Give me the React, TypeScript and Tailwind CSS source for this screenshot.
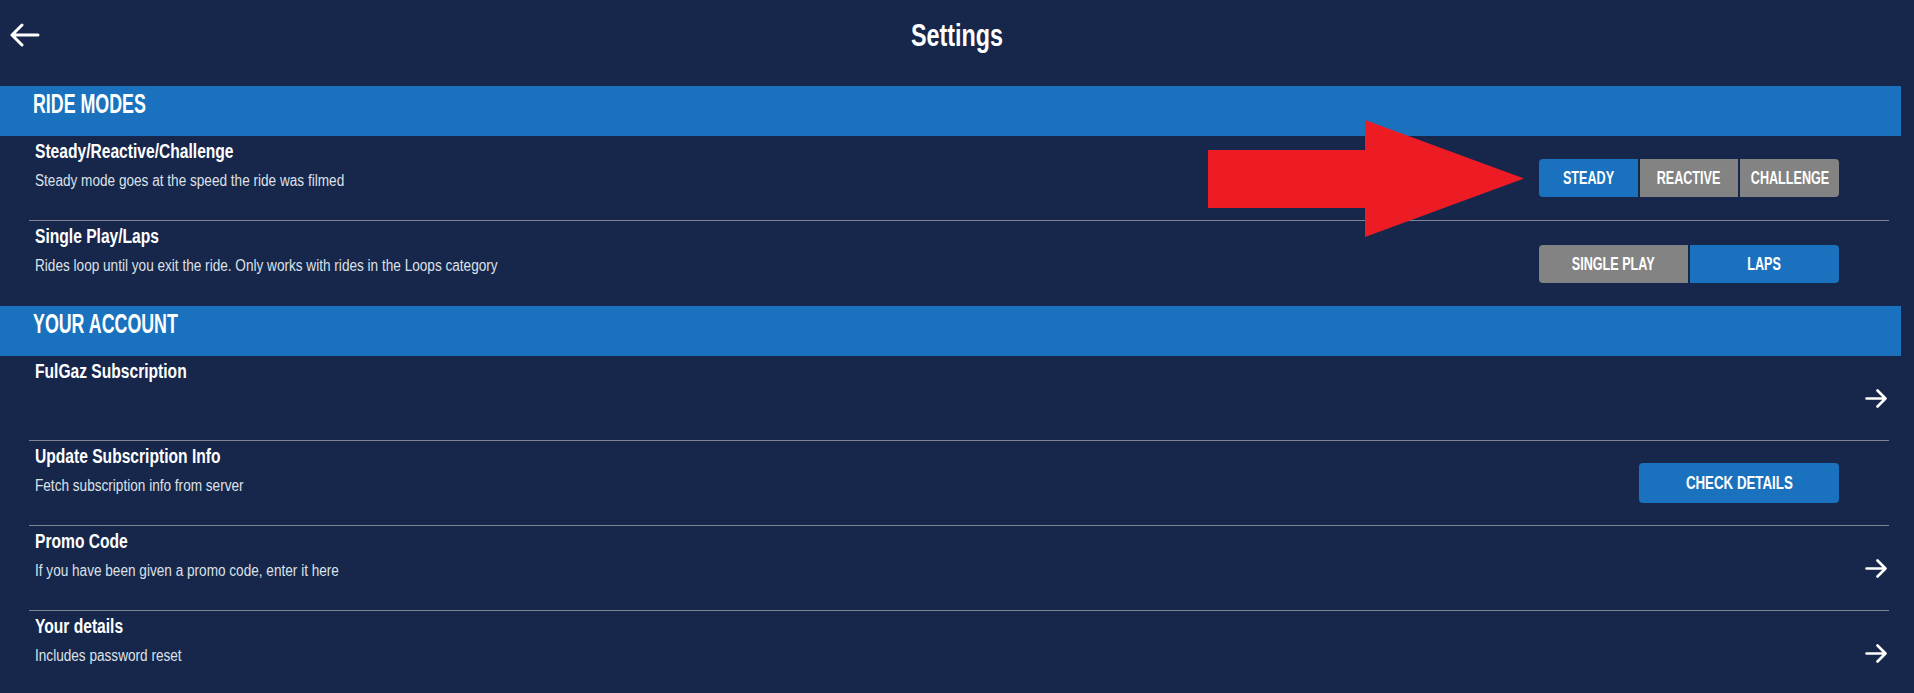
import React from "react";
import clsx from "clsx";

const BackArrowIcon = () => (
  <svg width="31" height="24" viewBox="0 0 31 24" fill="none">
    <path
      d="M29 12H3M13 2L3 12L13 22"
      stroke="#ffffff"
      strokeWidth="3"
      strokeLinecap="round"
      strokeLinejoin="round"
    />
  </svg>
);

const ForwardArrowIcon = () => (
  <svg width="23" height="19" viewBox="0 0 23 19" fill="none">
    <path
      d="M1.5 9.5H20.5M12.5 1.5L20.5 9.5L12.5 17.5"
      stroke="#ffffff"
      strokeWidth="2.6"
      strokeLinecap="round"
      strokeLinejoin="round"
    />
  </svg>
);

// the red annotation arrow drawn over the screenshot
const RedArrow = () => (
  <svg
    className="absolute left-[1208px] top-[120px]"
    width="316"
    height="117"
    viewBox="0 0 316 117"
  >
    <polygon points="0,30 157,30 157,0 316,58.5 157,117 157,88 0,88" fill="#ed1c24" />
  </svg>
);

const SectionHeader = ({ label }: { label: string }) => (
  <div className="mr-[13px] h-[50px] bg-[#1a72be] pl-[33px] pt-[2px]">
    <div className="origin-left scale-x-66 text-[27px] font-bold leading-[32px] text-white">
      {label}
    </div>
  </div>
);

interface SegmentedProps {
  options: string[];
  active: number;
}

const Segmented = ({ options, active }: SegmentedProps) => (
  <div
    className={clsx(
      "mr-[50px] grid h-[38px] w-[300px] gap-[2px] self-center",
      options.length === 3 ? "grid-cols-3" : "grid-cols-2",
    )}
  >
    {options.map((option, i) => (
      <button
        key={option}
        className={clsx(
          "flex items-center justify-center",
          i === active ? "bg-[#1a72be]" : "bg-[#838383]",
          i === 0 && "rounded-l-[4px]",
          i === options.length - 1 && "rounded-r-[4px]",
        )}
      >
        <span className="block scale-x-70 text-[18px] font-bold leading-[22px] whitespace-nowrap text-white">
          {option}
        </span>
      </button>
    ))}
  </div>
);

interface RowProps {
  title: string;
  description?: string;
  right?: React.ReactNode;
  last?: boolean;
}

const SettingRow = ({ title, description, right, last }: RowProps) => (
  <div
    className={clsx(
      "ml-[29px] mr-[25px] flex h-[85px] justify-between",
      !last && "border-b border-[#7d8494]",
    )}
  >
    <div className="flex-1 pl-[6px] pt-[3px]">
      <div className="origin-left scale-x-78 text-[20px] font-bold leading-[24px] whitespace-nowrap text-white">
        {title}
      </div>
      {description && (
        <div className="mt-[8px] origin-left scale-x-85 text-[16px] leading-[20px] whitespace-nowrap text-[#dde1e9]">
          {description}
        </div>
      )}
    </div>
    {right}
  </div>
);

const RowArrow = () => (
  <div className="mr-[1px] self-center">
    <ForwardArrowIcon />
  </div>
);

export default function App() {
  return (
    <div className="relative h-[693px] w-full overflow-hidden bg-[#16274b] font-['Liberation_Sans',Arial,sans-serif]">
      <header className="flex h-[86px] items-start">
        <div className="ml-[9px] mt-[23px] w-[31px]">
          <BackArrowIcon />
        </div>
        <h1 className="flex-1 origin-center scale-x-73 pt-[15px] text-center text-[32px] font-bold leading-[40px] text-white">
          Settings
        </h1>
        <div className="w-[40px]" />
      </header>

      <SectionHeader label="RIDE MODES" />
      <div>
        <SettingRow
          title="Steady/Reactive/Challenge"
          description="Steady mode goes at the speed the ride was filmed"
          right={<Segmented options={["STEADY", "REACTIVE", "CHALLENGE"]} active={0} />}
        />
        <SettingRow
          title="Single Play/Laps"
          description="Rides loop until you exit the ride. Only works with rides in the Loops category"
          right={<Segmented options={["SINGLE PLAY", "LAPS"]} active={1} />}
          last
        />
      </div>

      <SectionHeader label="YOUR ACCOUNT" />
      <div>
        <SettingRow title="FulGaz Subscription" right={<RowArrow />} />
        <SettingRow
          title="Update Subscription Info"
          description="Fetch subscription info from server"
          right={
            <button className="mr-[50px] flex h-[40px] w-[200px] items-center justify-center self-center rounded-[4px] bg-[#1a72be]">
              <span className="block scale-x-70 text-[19px] font-bold leading-[22px] whitespace-nowrap text-white">
                CHECK DETAILS
              </span>
            </button>
          }
        />
        <SettingRow
          title="Promo Code"
          description="If you have been given a promo code, enter it here"
          right={<RowArrow />}
        />
        <SettingRow
          title="Your details"
          description="Includes password reset"
          right={<RowArrow />}
          last
        />
      </div>

      <RedArrow />
    </div>
  );
}
